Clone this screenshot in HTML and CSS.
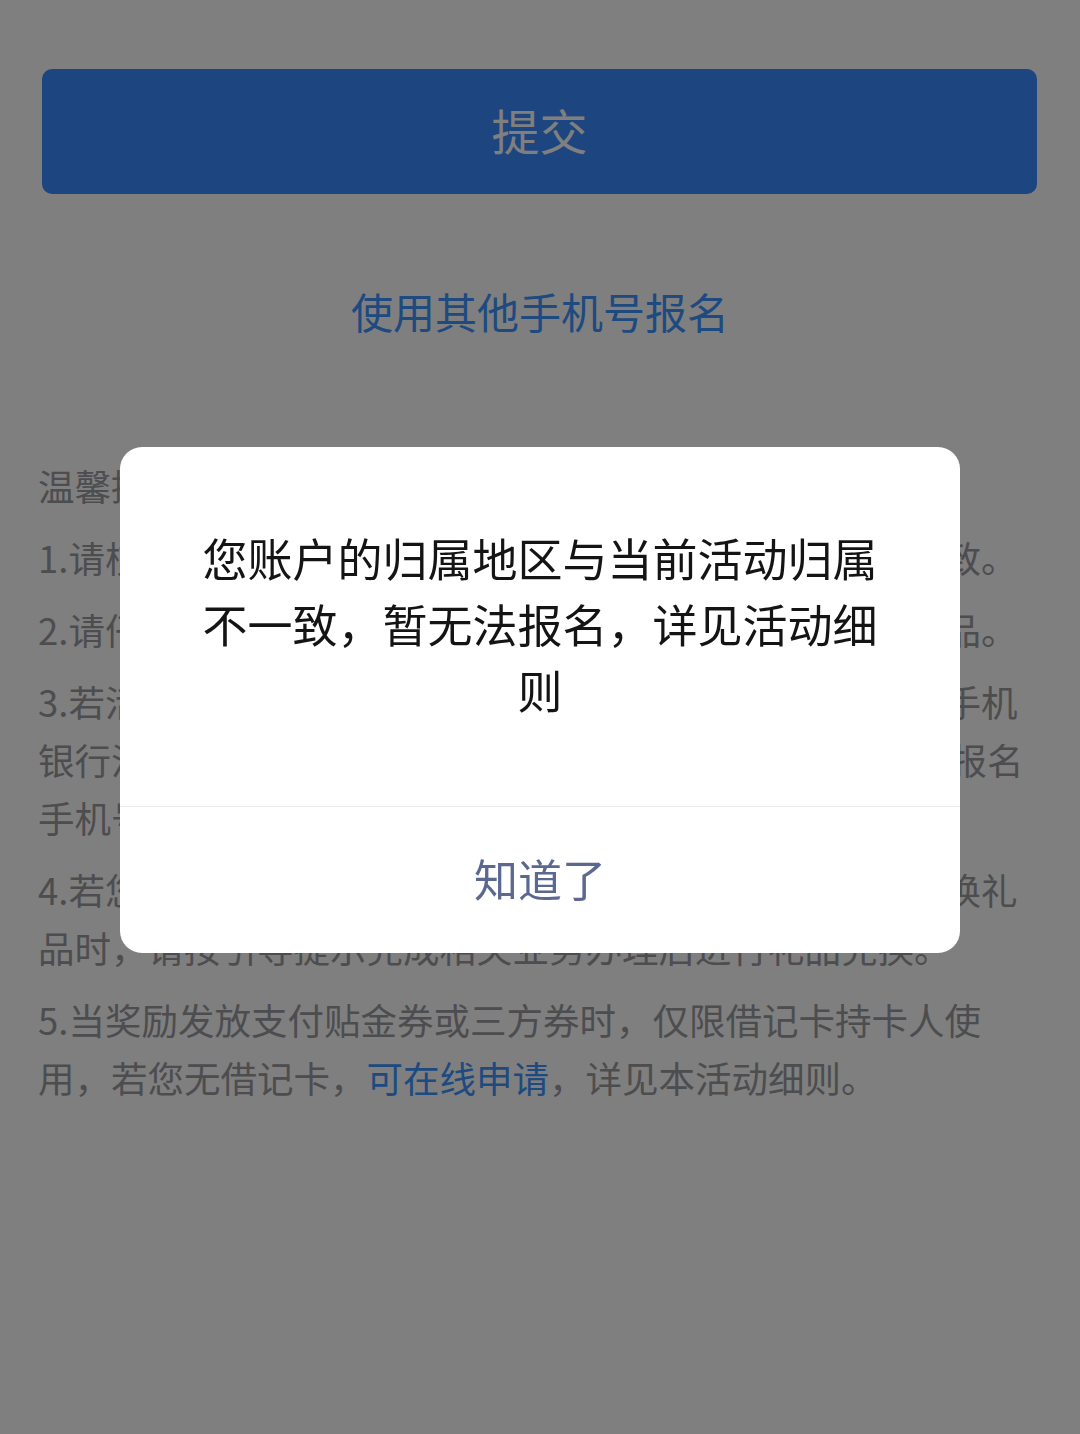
FILE: index.html
```html
<!DOCTYPE html>
<html lang="zh-CN">
<head>
    <meta charset="UTF-8">
    <meta name="viewport" content="width=device-width, initial-scale=1.0">
    <title>活动报名</title>
    <link rel="stylesheet" href="styles.css">
</head>
<body>

    <!-- 报名页面 -->
    <div class="page">
        <button class="submit-btn">提交</button>

        <div class="other-phone">使用其他手机号报名</div>

        <!-- 温馨提示 -->
        <div class="tips">
            <p class="tips-title">温馨提示</p>
            <p>1.请核对活动报名手机号与您手机银行登录手机号保持一致。</p>
            <p>2.请仔细阅读活动规则，在活动有效期内完成任务领取奖品。</p>
            <p>3.若活动参与需登录手机银行，请使用本人实名注册本行手机银行活动页面完成登录，且当前登录手机号需与本次活动报名手机号保持一致。</p>
            <p>4.若您已获得活动奖励但暂未满足领取条件，在线申请兑换礼品时，请按引导提示完成相关业务办理后进行礼品兑换。</p>
            <p>5.当奖励发放支付贴金券或三方券时，仅限借记卡持卡人使用，若您无借记卡，<span class="tips-link">可在线申请</span>，详见本活动细则。</p>
        </div>
    </div>

    <!-- 弹窗 -->
    <div class="mask">
        <div class="dialog">
            <div class="dialog-msg">您账户的归属地区与当前活动归属不一致，暂无法报名，详见活动细则</div>
            <div class="dialog-btn">知道了</div>
        </div>
    </div>

</body>
</html>
```

FILE: styles.css
```css
/* General reset */
* {
    margin: 0;
    padding: 0;
    box-sizing: border-box;
    font-family: "Noto Sans CJK SC", "Noto Sans", sans-serif;
}

body {
    background-color: #FFF;
    min-height: 1434px;
}

/* Page */
.page {
    padding-top: 69px;
}

.submit-btn {
    display: flex;
    align-items: center;
    justify-content: center;
    width: calc(100% - 85px);
    height: 125px;
    margin: 0 43px 0 42px;
    padding-bottom: 5px;
    border: none;
    border-radius: 10px;
    background-color: #3A8AFF;
    color: #FFF;
    font-size: 48px;
}

.other-phone {
    margin-top: 88px;
    text-align: center;
    font-size: 42px;
    line-height: 58px;
    color: #3C94FF;
}

/* Tips */
.tips {
    margin-top: 117px;
    padding: 0 38px;
    color: #9A9AA0;
    font-size: 36.5px;
    line-height: 58px;
}

.tips p {
    margin-bottom: 14px;
}

.tips-link {
    color: #3C94FF;
}

/* Dialog */
.mask {
    position: fixed;
    top: 0;
    left: 0;
    right: 0;
    bottom: 0;
    background-color: rgba(0, 0, 0, 0.5);
    display: flex;
    justify-content: center;
    align-items: flex-start;
    padding-top: 447px;
}

.dialog {
    width: 840px;
    background-color: #FFF;
    border-radius: 22px;
    overflow: hidden;
}

.dialog-msg {
    padding: 78px 80px 83px;
    text-align: center;
    font-size: 45px;
    line-height: 66px;
    color: #141414;
}

.dialog-btn {
    display: flex;
    align-items: center;
    justify-content: center;
    height: 147px;
    padding-bottom: 5px;
    border-top: 1px solid #EBEBEB;
    font-size: 44px;
    color: #5B6990;
}
```
